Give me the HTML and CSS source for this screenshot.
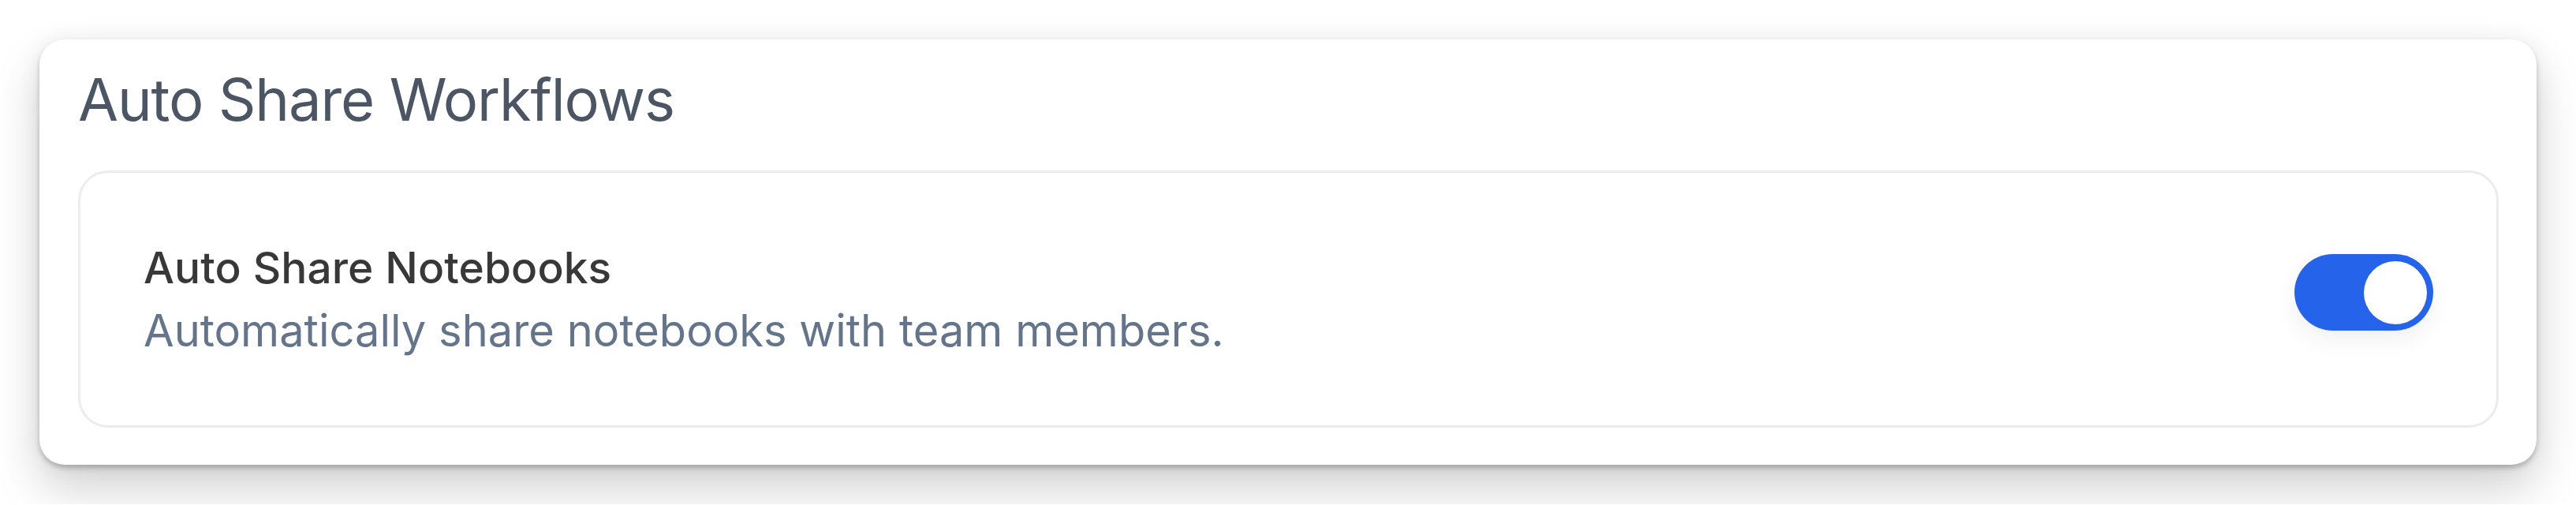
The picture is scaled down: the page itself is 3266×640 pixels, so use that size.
FILE: index.html
```html
<!DOCTYPE html>
<html lang="en">
<head>
    <meta charset="UTF-8">
    <meta name="viewport" content="width=device-width, initial-scale=1.0">
    <title>Auto Share Workflows</title>
    <link rel="stylesheet" href="styles.css">
</head>
<body>
    <section class="card">
        <h2 class="card-title">Auto Share Workflows</h2>
        <div class="setting">
            <div class="setting-text">
                <h3 class="setting-name">Auto Share Notebooks</h3>
                <p class="setting-desc">Automatically share notebooks with team members.</p>
            </div>
            <button class="toggle is-on" aria-pressed="true" aria-label="Auto Share Notebooks">
                <span class="toggle-knob"></span>
            </button>
        </div>
    </section>
</body>
</html>
```

FILE: styles.css
```css
body {
    margin: 0;
    padding: 50px;
    background-color: #fff;
    font-family: Inter, "Noto Sans", Arial, sans-serif;
}

.card {
    background: #fff;
    border-radius: 32px;
    padding: 32px 48px 47px 49px;
    box-shadow: 0 4px 6px rgba(0, 0, 0, 0.22), 0 30px 60px rgba(0, 0, 0, 0.18), 0 0 30px rgba(0, 0, 0, 0.05);
}

.card-title {
    margin: 0 0 44px;
    font-size: 74px;
    font-weight: 400;
    line-height: 1.21;
    letter-spacing: -1.1px;
    color: #4b5563;
}

.setting {
    display: flex;
    align-items: center;
    justify-content: space-between;
    padding: 80px;
    border: 3px solid #ececec;
    border-radius: 38px;
}

.setting-name {
    margin: 0;
    font-size: 55px;
    font-weight: 550;
    line-height: 80px;
    letter-spacing: 0.1px;
    color: #383838;
}

.setting-desc {
    margin: 0;
    font-size: 56px;
    line-height: 80px;
    color: #64748b;
}

.toggle {
    width: 176px;
    height: 97px;
    margin-bottom: 16px;
    padding: 0 8px;
    border: none;
    border-radius: 50px;
    background-color: #e5e7eb;
    display: flex;
    align-items: center;
    cursor: pointer;
    box-shadow: 0 12px 30px rgba(0, 0, 0, 0.06);
}

.toggle.is-on {
    background-color: #2563eb;
    justify-content: flex-end;
}

.toggle-knob {
    width: 80px;
    height: 80px;
    border-radius: 50%;
    background: #fff;
}
```
